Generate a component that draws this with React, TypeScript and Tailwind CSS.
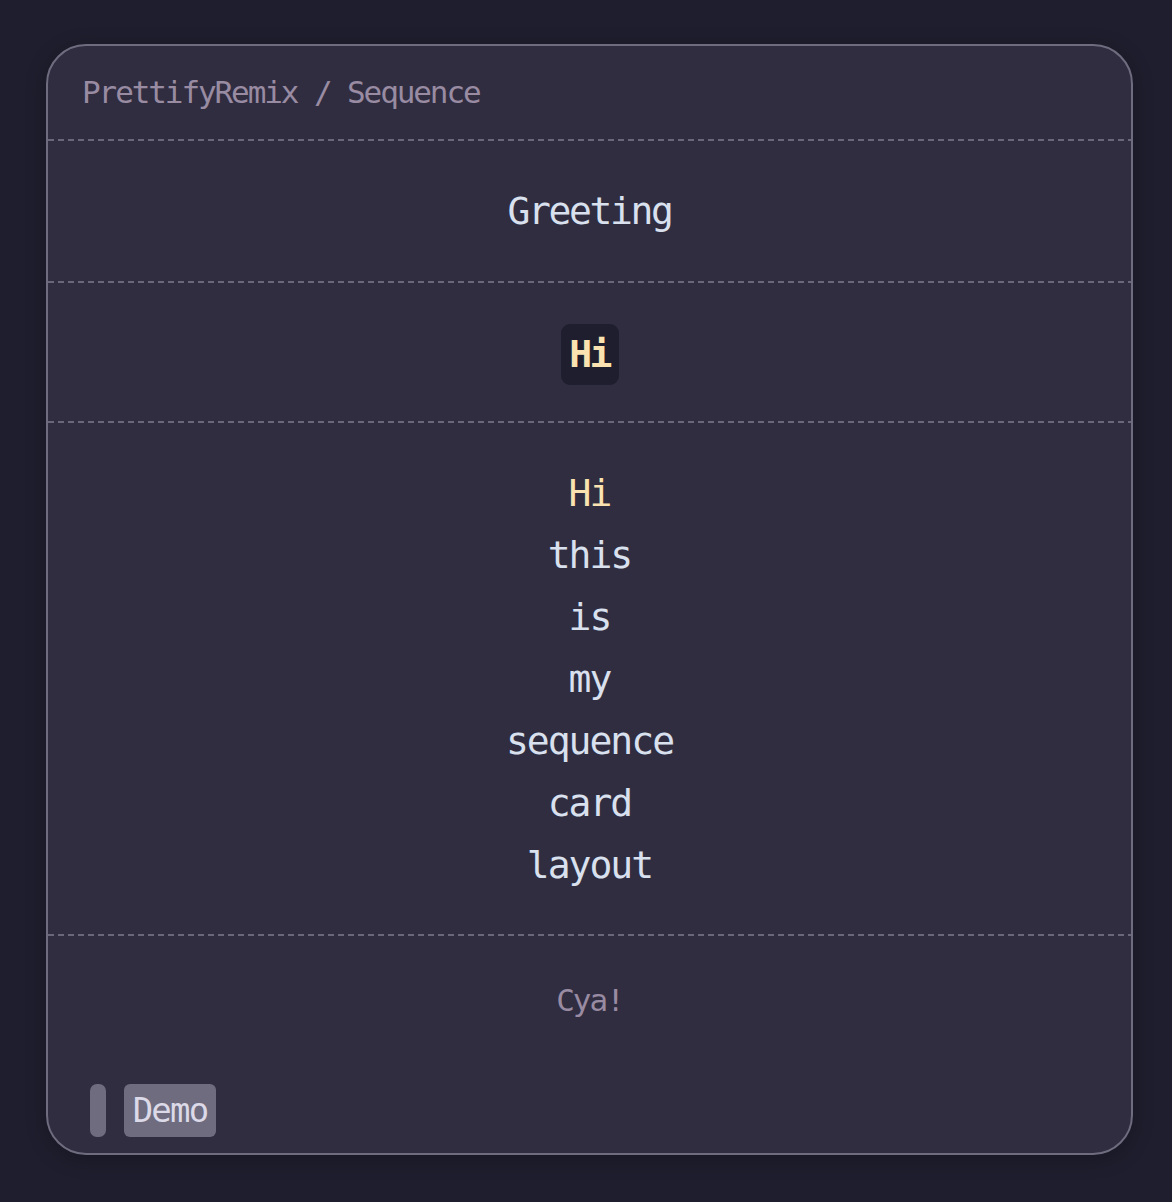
import React from "react";

const mono = { fontFamily: '"DejaVu Sans Mono", "Liberation Mono", monospace' };

function Divider() {
  return (
    <div className="h-[2px] w-full bg-[repeating-linear-gradient(90deg,#6a677b_0px,#6a677b_6px,transparent_6px,transparent_10px)]" />
  );
}

export default function App() {
  const words = ["this", "is", "my", "sequence", "card", "layout"];
  return (
    <div className="min-h-screen bg-[#1e1e2e] pl-[46px] pr-[39px] pt-[44px] pb-[47px]" style={mono}>
      <div className="w-full rounded-[40px] border-2 border-[#6e6c7e] bg-[#302d41] overflow-hidden shadow-[0_4px_20px_rgba(0,0,0,0.25)]">
        <div className="h-[93px] flex items-center px-[34px] text-[31px] tracking-[-2.1px] text-[#988ba2]">
          PrettifyRemix / Sequence
        </div>
        <Divider />
        <div className="h-[140px] flex items-center justify-center text-[38px] tracking-[-2.4px] text-[#d9e0ee]">
          Greeting
        </div>
        <Divider />
        <div className="h-[138px] flex items-center justify-center pt-[4px]">
          <div className="w-[58px] h-[61px] rounded-[9px] bg-[#1e1e2e] flex items-center justify-center text-[38px] font-bold tracking-[-2.6px] text-[#fae3b0]">
            Hi
          </div>
        </div>
        <Divider />
        <div className="pt-[39px] pb-[38px] flex flex-col items-center text-[38px] tracking-[-2px] leading-[62px] text-[#d9e0ee]">
          <div className="text-[#fae3b0]">Hi</div>
          {words.map((w) => (
            <div key={w}>{w}</div>
          ))}
        </div>
        <Divider />
        <div className="pt-[44px] flex flex-col">
          <div className="h-[40px] flex items-center justify-center text-[31px] tracking-[-2px] text-[#988ba2]">
            Cya!
          </div>
          <div className="mt-[64px] mb-[16px] ml-[42px] flex items-center gap-[18px]">
            <div className="w-[16px] h-[53px] rounded-[7px] bg-[#6e6c7e]" />
            <div className="w-[92px] h-[53px] rounded-[6px] bg-[#6e6c7e] flex items-center justify-center text-[34px] tracking-[-1.8px] text-[#dcd9e8]">
              Demo
            </div>
          </div>
        </div>
      </div>
    </div>
  );
}
